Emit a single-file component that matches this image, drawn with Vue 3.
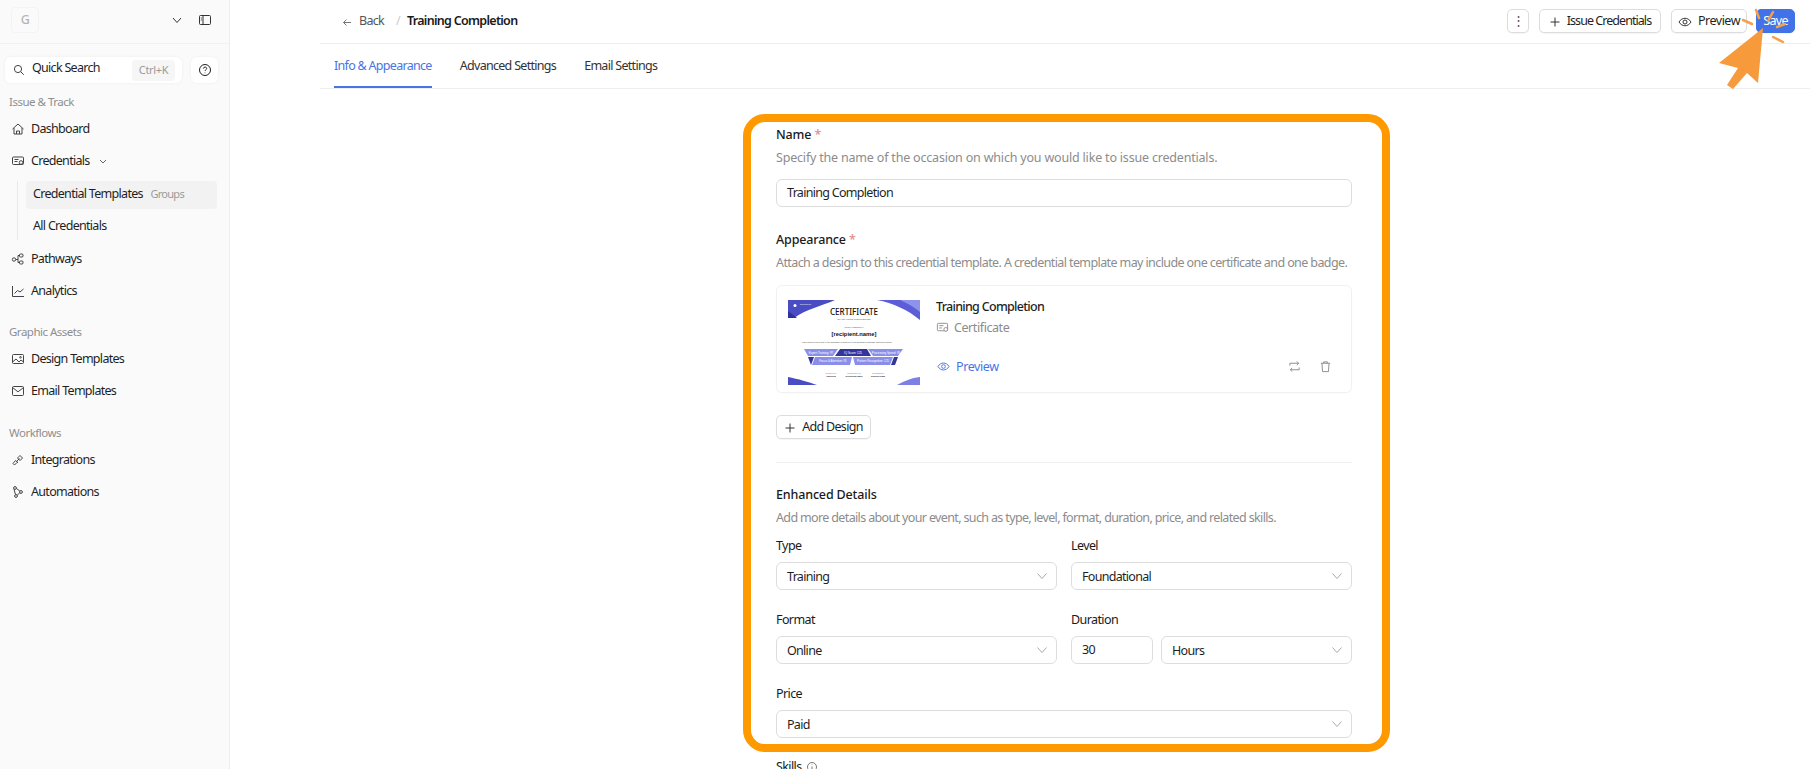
<template>
  <div class="page">
    <aside class="sidebar">
      <div class="side-top">
        <div class="logo">G</div>
        <svg class="chev-top" viewBox="0 0 12 12"><path d="M2 4l4 4.500L10 4" /></svg>
        <svg class="panel-icon" viewBox="0 0 14 12"><rect x="1.500" y="1.500" width="11" height="9" rx="1" /><path d="M5 1.500v9M2.800 4h1M2.800 6h1" /></svg>
      </div>

      <div class="search-row">
        <div class="search">
          <svg class="ico" viewBox="0 0 14 14"><circle cx="6" cy="6" r="3.600" /><path d="M8.800 8.800l3 3" /></svg>
          <span class="search-text">Quick Search</span>
          <span class="kbd">Ctrl+K</span>
        </div>
        <div class="help">
          <svg viewBox="0 0 14 14"><circle cx="7" cy="7" r="5.500" /><path d="M5.400 5.600c0-2 3.300-2 3.300-.1 0 1.200-1.700 1.300-1.700 2.500M7 9.600v.6" /></svg>
        </div>
      </div>

      <div class="group-label first">Issue &amp; Track</div>
      <div class="nav-item">
        <svg class="ico" viewBox="0 0 14 14"><path d="M1.500 7L7 2l5.500 5M3 6v6h8V6M5.500 12V9h3v3" /></svg>
        Dashboard
      </div>
      <div class="nav-item">
        <svg class="ico" viewBox="0 0 14 14"><rect x="1.500" y="3" width="11" height="7.500" rx="1" /><path d="M3.500 5.500h4M3.500 7.500h3" /><circle cx="10" cy="8.500" r="1.800" fill="#fafafa" /></svg>
        Credentials
        <svg class="chev-small" viewBox="0 0 10 10"><path d="M2 4l3 3 3-3" /></svg>
      </div>
      <div class="sub-list">
        <div class="sub-item active">Credential Templates <span class="groups">Groups</span></div>
        <div class="sub-item">All Credentials</div>
      </div>
      <div class="nav-item">
        <svg class="ico" viewBox="0 0 14 14"><circle cx="3" cy="7.500" r="1.700" /><rect x="8.500" y="2" width="3.500" height="3" rx="1" /><rect x="8.500" y="9" width="3.500" height="3" rx="1" /><path d="M4.700 7.500h2.300V3.500h1.500M7 7.500v3h1.500" /></svg>
        Pathways
      </div>
      <div class="nav-item">
        <svg class="ico" viewBox="0 0 14 14"><path d="M1.500 2v10.500H13M3.500 9.500l3-3 2.500 1.500 3.500-3" /></svg>
        Analytics
      </div>

      <div class="group-label">Graphic Assets</div>
      <div class="nav-item">
        <svg class="ico" viewBox="0 0 14 14"><rect x="1.500" y="2.500" width="11" height="9" rx="1" /><path d="M1.500 10l3.500-3 3 3 2-2 2.500 2" /><circle cx="9.500" cy="5.300" r=".8" /></svg>
        Design Templates
      </div>
      <div class="nav-item">
        <svg class="ico" viewBox="0 0 14 14"><rect x="1.500" y="2.500" width="11" height="9" rx="1" /><path d="M1.500 3.500L7 7.800l5.500-4.300" /></svg>
        Email Templates
      </div>

      <div class="group-label two">Workflows</div>
      <div class="nav-item">
        <svg class="ico" viewBox="0 0 14 14"><path d="M5.500 8.500l3-3M8 3.500l1-1 2.500 2.500-2.500 2.500L6.500 5zM6 9.500L3.500 12 2 10.500 4.500 7.500l2.500 2z" /></svg>
        Integrations
      </div>
      <div class="nav-item">
        <svg class="ico" viewBox="0 0 14 14"><circle cx="4" cy="3" r="1.400" /><circle cx="10" cy="7" r="1.400" /><circle cx="5" cy="11" r="1.400" /><path d="M5.400 3.500l3.400 2.500M8.700 7.800L6.300 10.200M3 4.300l1.500 5.300" /></svg>
        Automations
      </div>
    </aside>

    <main class="main">
      <header class="topbar">
        <svg class="back-arrow" viewBox="0 0 10 10"><path d="M9 5.500H1.500M4.500 2.500l-3 3 3 3" /></svg>
        <span class="back">Back</span>
        <span class="slash">/</span>
        <span class="crumb">Training Completion</span>
        <div class="actions">
          <button class="btn more">⋮</button>
          <button class="btn issue">
            <svg viewBox="0 0 12 12"><path d="M6 1.500v9M1.500 6h9" /></svg>
            Issue Credentials
          </button>
          <button class="btn preview">
            <svg viewBox="0 0 14 14"><path d="M1 7c3-5 9-5 12 0-3 5-9 5-12 0z" /><circle cx="7" cy="7" r="2" /></svg>
            Preview
          </button>
          <button class="btn save">Save</button>
        </div>
      </header>

      <nav class="tabs">
        <a v-for="t in tabs" :key="t" class="tab" :class="{ on: t === tabs[0] }">{{ t }}</a>
      </nav>

      <form class="form" @submit.prevent>
        <div class="label">Name <span class="req">*</span></div>
        <p class="desc wide">Specify the name of the occasion on which you would like to issue credentials.</p>
        <div class="field">Training Completion</div>

        <div class="label appearance">Appearance <span class="req">*</span></div>
        <p class="desc attach">Attach a design to this credential template. A credential template may include one certificate and one badge.</p>

        <div class="design-card">
          <svg class="thumb" viewBox="0 0 132 85">
            <rect width="132" height="85" fill="#fff" />
            <path d="M0 0h47C34 6 18 9 6 18H0z" fill="#4a4cc4" />
            <path d="M0 11l9 7H0z" fill="#2f2f9e" />
            <path d="M89 0h43v20C120 10 105 3 89 0z" fill="#5b5ed6" />
            <path d="M112 0h20v12c-6-5-13-9-20-12z" fill="#8f92ec" />
            <path d="M0 77c10 2 21 5 29 8H0z" fill="#4a4cc4" />
            <path d="M132 77c-9 1-16 4-23 8h23z" fill="#7c7fe4" />
            <circle cx="7" cy="5.500" r="1.500" fill="#fff" />
            <text x="12" y="5" class="c-logo">NeuronIQ</text>
            <text x="66" y="15.300" class="c-title">CERTIFICATE</text>
            <text x="66" y="20" class="c-sub">OF TRAINING COMPLETION</text>
            <text x="66" y="28" class="c-body">Proudly presented to</text>
            <text x="66" y="36" class="c-name">[recipient.name]</text>
            <text x="59" y="42.700" class="c-body">has completed 20 hours of the successful completion of the Strategic Leadership Training Program</text>
            <path d="M16 49h34l-5 7H20z" fill="#8a8ee8" />
            <path d="M52 49h27l4 7H47z" fill="#34349f" />
            <path d="M80 49h35l-5 7H85z" fill="#8a8ee8" />
            <path d="M27 57h37l-2 8H24z" fill="#8a8ee8" />
            <path d="M65 57h40l-3 8H67z" fill="#8a8ee8" />
            <path d="M20 57h6l-3 8z" fill="#34349f" />
            <path d="M103 65l3-8h4l-3 8z" fill="#34349f" />
            <text x="33" y="53.500" class="c-pill">Expert Training: 97</text>
            <text x="65" y="53.500" class="c-pill">IQ Score: 125</text>
            <text x="98" y="53.500" class="c-pill">Processing Speed: 95</text>
            <text x="45" y="62" class="c-pill">Focus &amp; Attention: 95</text>
            <text x="85" y="62" class="c-pill">Pattern Recognition: 125</text>
            <text x="43" y="73.500" class="c-foot">Certified by</text>
            <text x="43" y="76.800" class="c-foot b">Coursera</text>
            <text x="66" y="73.500" class="c-foot">Completed on</text>
            <text x="66" y="76.800" class="c-foot b">[certificate.date]</text>
            <text x="90" y="73.500" class="c-foot">Registration</text>
            <text x="90" y="76.800" class="c-foot b">Neuron Team</text>
          </svg>
          <div class="design-info">
            <div class="design-name">Training Completion</div>
            <div class="design-kind">
              <svg viewBox="0 0 14 14"><rect x="1.500" y="2.500" width="11" height="8" rx="1" /><path d="M3.500 5h4.500M3.500 7.500h3" /><circle cx="10.500" cy="9" r="2" fill="#fff" /></svg>
              Certificate
            </div>
            <div class="design-foot">
              <a class="design-preview">
                <svg viewBox="0 0 14 14"><path d="M1 7c3-5 9-5 12 0-3 5-9 5-12 0z" /><circle cx="7" cy="7" r="2" /></svg>
                Preview
              </a>
              <svg class="tool" viewBox="0 0 14 14"><path d="M2 6V3.500h9.500M9.500 1.500l2 2-2 2M12 8v2.500H2.500M4.500 8.500l-2 2 2 2" /></svg>
              <svg class="tool" viewBox="0 0 14 14"><path d="M2 3.500h10M5 3.500V2h4v1.500M3.200 3.500l.6 9h6.400l.6-9" /></svg>
            </div>
          </div>
        </div>

        <button class="btn add">
          <svg viewBox="0 0 12 12"><path d="M6 1.500v9M1.500 6h9" /></svg>
          Add Design
        </button>

        <hr class="divider" />

        <div class="label">Enhanced Details</div>
        <p class="desc enhanced">Add more details about your event, such as type, level, format, duration, price, and related skills.</p>

        <div class="row first-row">
          <div class="col">
            <div class="label small">Type</div>
            <div class="field select">Training<svg viewBox="0 0 12 12"><path d="M1.500 3.500L6 8.500l4.500-5" /></svg></div>
          </div>
          <div class="col">
            <div class="label small">Level</div>
            <div class="field select">Foundational<svg viewBox="0 0 12 12"><path d="M1.500 3.500L6 8.500l4.500-5" /></svg></div>
          </div>
        </div>

        <div class="row">
          <div class="col">
            <div class="label small">Format</div>
            <div class="field select">Online<svg viewBox="0 0 12 12"><path d="M1.500 3.500L6 8.500l4.500-5" /></svg></div>
          </div>
          <div class="col">
            <div class="label small">Duration</div>
            <div class="duration">
              <div class="field num">30</div>
              <div class="field select grow">Hours<svg viewBox="0 0 12 12"><path d="M1.500 3.500L6 8.500l4.500-5" /></svg></div>
            </div>
          </div>
        </div>

        <div class="row">
          <div class="col">
            <div class="label small">Price</div>
            <div class="field select">Paid<svg viewBox="0 0 12 12"><path d="M1.500 3.500L6 8.500l4.500-5" /></svg></div>
          </div>
        </div>

        <div class="label small skills">
          Skills
          <svg viewBox="0 0 12 12"><circle cx="6" cy="6" r="4.500" /><path d="M6 5.500v3M6 3.500v.6" /></svg>
        </div>
      </form>
    </main>

    <!-- tutorial highlight drawn over the page -->
    <div class="highlight"></div>
    <svg class="pointer" viewBox="0 0 90 95">
      <path d="M53 28L9 63l19 5-11 17 6 4 14-16 11 10z" fill="#f79a3c" />
      <path d="M33 20l9 4M46 10l3 8M63 12l-5 9M67 27l8-3M63 37l10 5" class="spark" />
    </svg>
  </div>
</template>

<script setup>
const tabs = ['Info & Appearance', 'Advanced Settings', 'Email Settings']
</script>

<style>
html,
body {
  margin: 0;
  background: #fff;
}
</style>

<style scoped>
.page {
  position: relative;
  display: flex;
  width: 1810px;
  height: 769px;
  overflow: hidden;
  background: #fff;
  color: #1f1f1f;
  font-family: "Noto Sans", sans-serif;
  font-size: 12.5px;
  letter-spacing: -0.7px;
}

svg {
  fill: none;
  stroke: currentColor;
  stroke-width: 1;
  flex: none;
}

/* sidebar */
.sidebar {
  width: 230px;
  flex: none;
  box-sizing: border-box;
  background: #fafafa;
  border-right: 1px solid #eeeeee;
}

.side-top {
  height: 43px;
  display: flex;
  align-items: center;
  border-bottom: 1px solid #f2f2f2;
  padding-left: 11px;
}

.logo {
  width: 28px;
  height: 26px;
  margin-top: -3px;
  border: 1px solid #f3f3f3;
  border-radius: 4px;
  color: #b5b5b5;
  text-align: center;
  line-height: 24px;
  font-weight: 500;
  box-sizing: border-box;
}

.chev-top {
  width: 12px;
  height: 12px;
  margin-left: 132px;
  margin-top: -3px;
  color: #333;
}

.panel-icon {
  width: 14px;
  height: 12px;
  margin-left: 15px;
  margin-top: -3px;
  color: #333;
}

.search-row {
  display: flex;
  gap: 9px;
  margin-top: 13px;
  padding-left: 5px;
}

.search {
  width: 177px;
  height: 26px;
  display: flex;
  align-items: center;
  background: #fff;
  border-radius: 6px;
  box-shadow: 0 0 3px rgba(0, 0, 0, 0.06);
  box-sizing: border-box;
  padding-left: 7px;
}

.search .ico {
  margin-right: 6px;
}

.search-text {
  flex: 1;
  padding-bottom: 5px;
}

.kbd {
  height: 21px;
  line-height: 19px;
  width: 43px;
  text-align: center;
  margin-right: 7px;
  background: #f6f6f6;
  border-radius: 4px;
  color: #9a9a9a;
  font-size: 11px;
  letter-spacing: -0.35px;
}

.help {
  width: 27px;
  height: 26px;
  display: flex;
  align-items: center;
  justify-content: center;
  background: #fff;
  border-radius: 6px;
  box-shadow: 0 0 3px rgba(0, 0, 0, 0.06);
}

.help svg {
  width: 14px;
  height: 14px;
}

.group-label {
  height: 20px;
  line-height: 18px;
  margin-top: 16px;
  padding-left: 9px;
  color: #8f8f8f;
  font-size: 11.5px;
  letter-spacing: -0.5px;
}

.group-label.first {
  margin-top: 10px;
}

.group-label.two {
  margin-top: 17px;
}

.nav-item {
  height: 30px;
  padding-bottom: 2px;
  display: flex;
  align-items: center;
  padding-left: 11px;
  gap: 6px;
}

.ico {
  width: 14px;
  height: 14px;
  color: #444;
  margin-top: 2px;
}

.search .ico {
  margin-top: 0;
}

.chev-small {
  width: 10px;
  height: 10px;
  margin-left: 2px;
  margin-top: 2px;
  color: #666;
}

.sub-list {
  margin: 4px 0 3px 17px;
  padding-left: 8px;
  border-left: 1px solid #e9e9e9;
  width: 191px;
  display: flex;
  flex-direction: column;
  gap: 3px;
}

.sub-item {
  height: 28px;
  line-height: 26px;
  padding-left: 7px;
  border-radius: 4px;
}

.sub-item + .sub-item {
  line-height: 28px;
}

.sub-item.active {
  background: #f2f2f2;
}

.groups {
  color: #9a9a9a;
  font-size: 11px;
  margin-left: 5px;
}

/* main */
.main {
  margin-left: 90px;
  width: 1490px;
  flex: none;
}

.topbar {
  height: 44px;
  display: flex;
  align-items: center;
  padding: 0 15px 0 22px;
  box-sizing: border-box;
  border-bottom: 1px solid #eeeeee;
}

.back-arrow {
  width: 10px;
  height: 10px;
  margin-right: 7px;
  color: #777;
}

.back,
.slash,
.crumb {
  padding-bottom: 3px;
}

.back {
  color: #555;
}

.slash {
  margin: 0 7px 0 12px;
  color: #ccc;
}

.crumb {
  font-weight: 600;
  color: #1a1a1a;
}

.actions {
  margin-left: auto;
  margin-top: -1px;
  display: flex;
  gap: 10px;
}

.btn {
  height: 24px;
  display: inline-flex;
  align-items: center;
  justify-content: center;
  gap: 6px;
  background: #fff;
  border: 1px solid #dcdcdc;
  border-radius: 5px;
  box-shadow: 0 1px 1px rgba(0, 0, 0, 0.04);
  color: #1f1f1f;
  font: inherit;
  letter-spacing: inherit;
  padding: 0 0 2px;
  box-sizing: border-box;
}

.btn svg {
  width: 12px;
  height: 12px;
  margin-top: 3px;
  color: #333;
}

.more {
  width: 22px;
  color: #555;
}

.issue {
  width: 122px;
  letter-spacing: -0.95px;
}

.preview {
  width: 76px;
  letter-spacing: -0.5px;
}

.preview svg {
  width: 14px;
  height: 14px;
}

.save {
  width: 39px;
  margin-left: -1px;
  background: #4272e8;
  border-color: #4272e8;
  color: #fff;
}

.tabs {
  height: 45px;
  display: flex;
  gap: 28px;
  padding-left: 14px;
  box-sizing: border-box;
  border-bottom: 1px solid #eeeeee;
}

.tab {
  line-height: 44px;
  height: 44px;
  box-sizing: border-box;
  color: #333;
}

.tab.on {
  color: #4a74e4;
  border-bottom: 2px solid #4a74e4;
}

.form {
  width: 576px;
  margin: 0 0 0 456px;
  padding-top: 36px;
}

.label {
  height: 20px;
  line-height: 20px;
  font-weight: 500;
  color: #1a1a1a;
  letter-spacing: -0.15px;
}

.label.small {
  font-weight: 400;
  margin-bottom: 6px;
  letter-spacing: -0.6px;
}

.label.appearance {
  margin-top: 23px;
}

.req {
  color: #e58a8a;
}

.desc {
  margin: 3px 0 0;
  height: 20px;
  line-height: 20px;
  color: #8c8c8c;
  white-space: nowrap;
}

.desc.wide {
  letter-spacing: -0.19px;
}

.desc.attach {
  letter-spacing: -0.6px;
}

.desc.enhanced {
  letter-spacing: -0.64px;
}

.desc + .field {
  margin-top: 11px;
}

.field {
  height: 28px;
  line-height: 25px;
  padding-left: 10px;
  border: 1px solid #dddddd;
  border-radius: 6px;
  box-sizing: border-box;
  background: #fff;
}

.select {
  display: flex;
  justify-content: space-between;
  align-items: center;
  padding-right: 8px;
}

.select svg {
  width: 12px;
  height: 12px;
  color: #aaa;
}

.design-card {
  margin-top: 12px;
  height: 108px;
  display: flex;
  border: 1px solid #f1f1f1;
  border-radius: 6px;
  box-sizing: border-box;
  box-shadow: 0 1px 2px rgba(0, 0, 0, 0.02);
  padding: 14px 0 0 11px;
}

.thumb {
  width: 132px;
  height: 85px;
  stroke: none;
}

.c-title,
.c-sub,
.c-name,
.c-body,
.c-pill,
.c-foot {
  text-anchor: middle;
  letter-spacing: 0;
  font-family: "Liberation Sans", sans-serif;
}

.c-logo {
  font-size: 2.5px;
  fill: #fff;
  letter-spacing: 0;
  font-family: "Liberation Sans", sans-serif;
}

.c-title {
  font-family: "Noto Sans", sans-serif;
  font-size: 8.1px;
  font-weight: 500;
  fill: #111;
}

.c-sub {
  font-size: 2.5px;
  fill: #555;
}

.c-name {
  font-size: 5.8px;
  font-weight: 700;
  fill: #111;
}

.c-body {
  font-size: 2.05px;
  fill: #444;
}

.c-pill {
  font-size: 2.9px;
  fill: #fff;
}

.c-foot {
  font-size: 2.2px;
  fill: #777;
}

.c-foot.b {
  font-weight: 700;
  fill: #222;
}

.design-info {
  flex: 1;
  padding-left: 16px;
  min-width: 0;
}

.design-name {
  height: 20px;
  line-height: 20px;
  margin-top: -3px;
  font-weight: 500;
}

.design-kind {
  display: flex;
  align-items: center;
  gap: 5px;
  height: 20px;
  color: #8c8c8c;
  letter-spacing: -0.42px;
}

.design-kind svg {
  width: 13px;
  height: 13px;
}

.design-foot {
  display: flex;
  align-items: center;
  height: 20px;
  margin-top: 19px;
  padding-right: 19px;
}

.design-preview {
  display: flex;
  align-items: center;
  gap: 6px;
  margin-right: auto;
  padding-left: 1px;
  color: #4a74e4;
  letter-spacing: -0.42px;
}

.design-preview svg {
  width: 13px;
  height: 13px;
}

.tool {
  width: 13px;
  height: 13px;
  color: #888;
}

.tool + .tool {
  margin-left: 18px;
}

.add {
  margin-top: 22px;
  width: 95px;
  display: flex;
}

.divider {
  margin: 23px 0 22px;
  border: 0;
  border-top: 1px solid #eeeeee;
}

.row {
  display: flex;
  gap: 14px;
  margin-top: 20px;
}

.first-row {
  margin-top: 8px;
}

.col {
  flex: 1;
  min-width: 0;
}

.duration {
  display: flex;
  gap: 8px;
}

.num {
  width: 82px;
  flex: none;
}

.grow {
  flex: 1;
}

.skills {
  margin-top: 19px;
  display: flex;
  align-items: center;
  gap: 4px;
}

.skills svg {
  width: 12px;
  height: 12px;
  color: #777;
}

/* overlay */
.highlight {
  position: absolute;
  left: 743px;
  top: 114px;
  width: 647px;
  height: 638px;
  border: 8px solid #ff9900;
  border-radius: 22px;
  box-sizing: border-box;
  pointer-events: none;
}

.pointer {
  position: absolute;
  left: 1710px;
  top: 0;
  width: 90px;
  height: 95px;
  stroke: none;
}

.spark {
  stroke: #f5a04a;
  stroke-width: 2.5;
  stroke-linecap: round;
  fill: none;
}
</style>
